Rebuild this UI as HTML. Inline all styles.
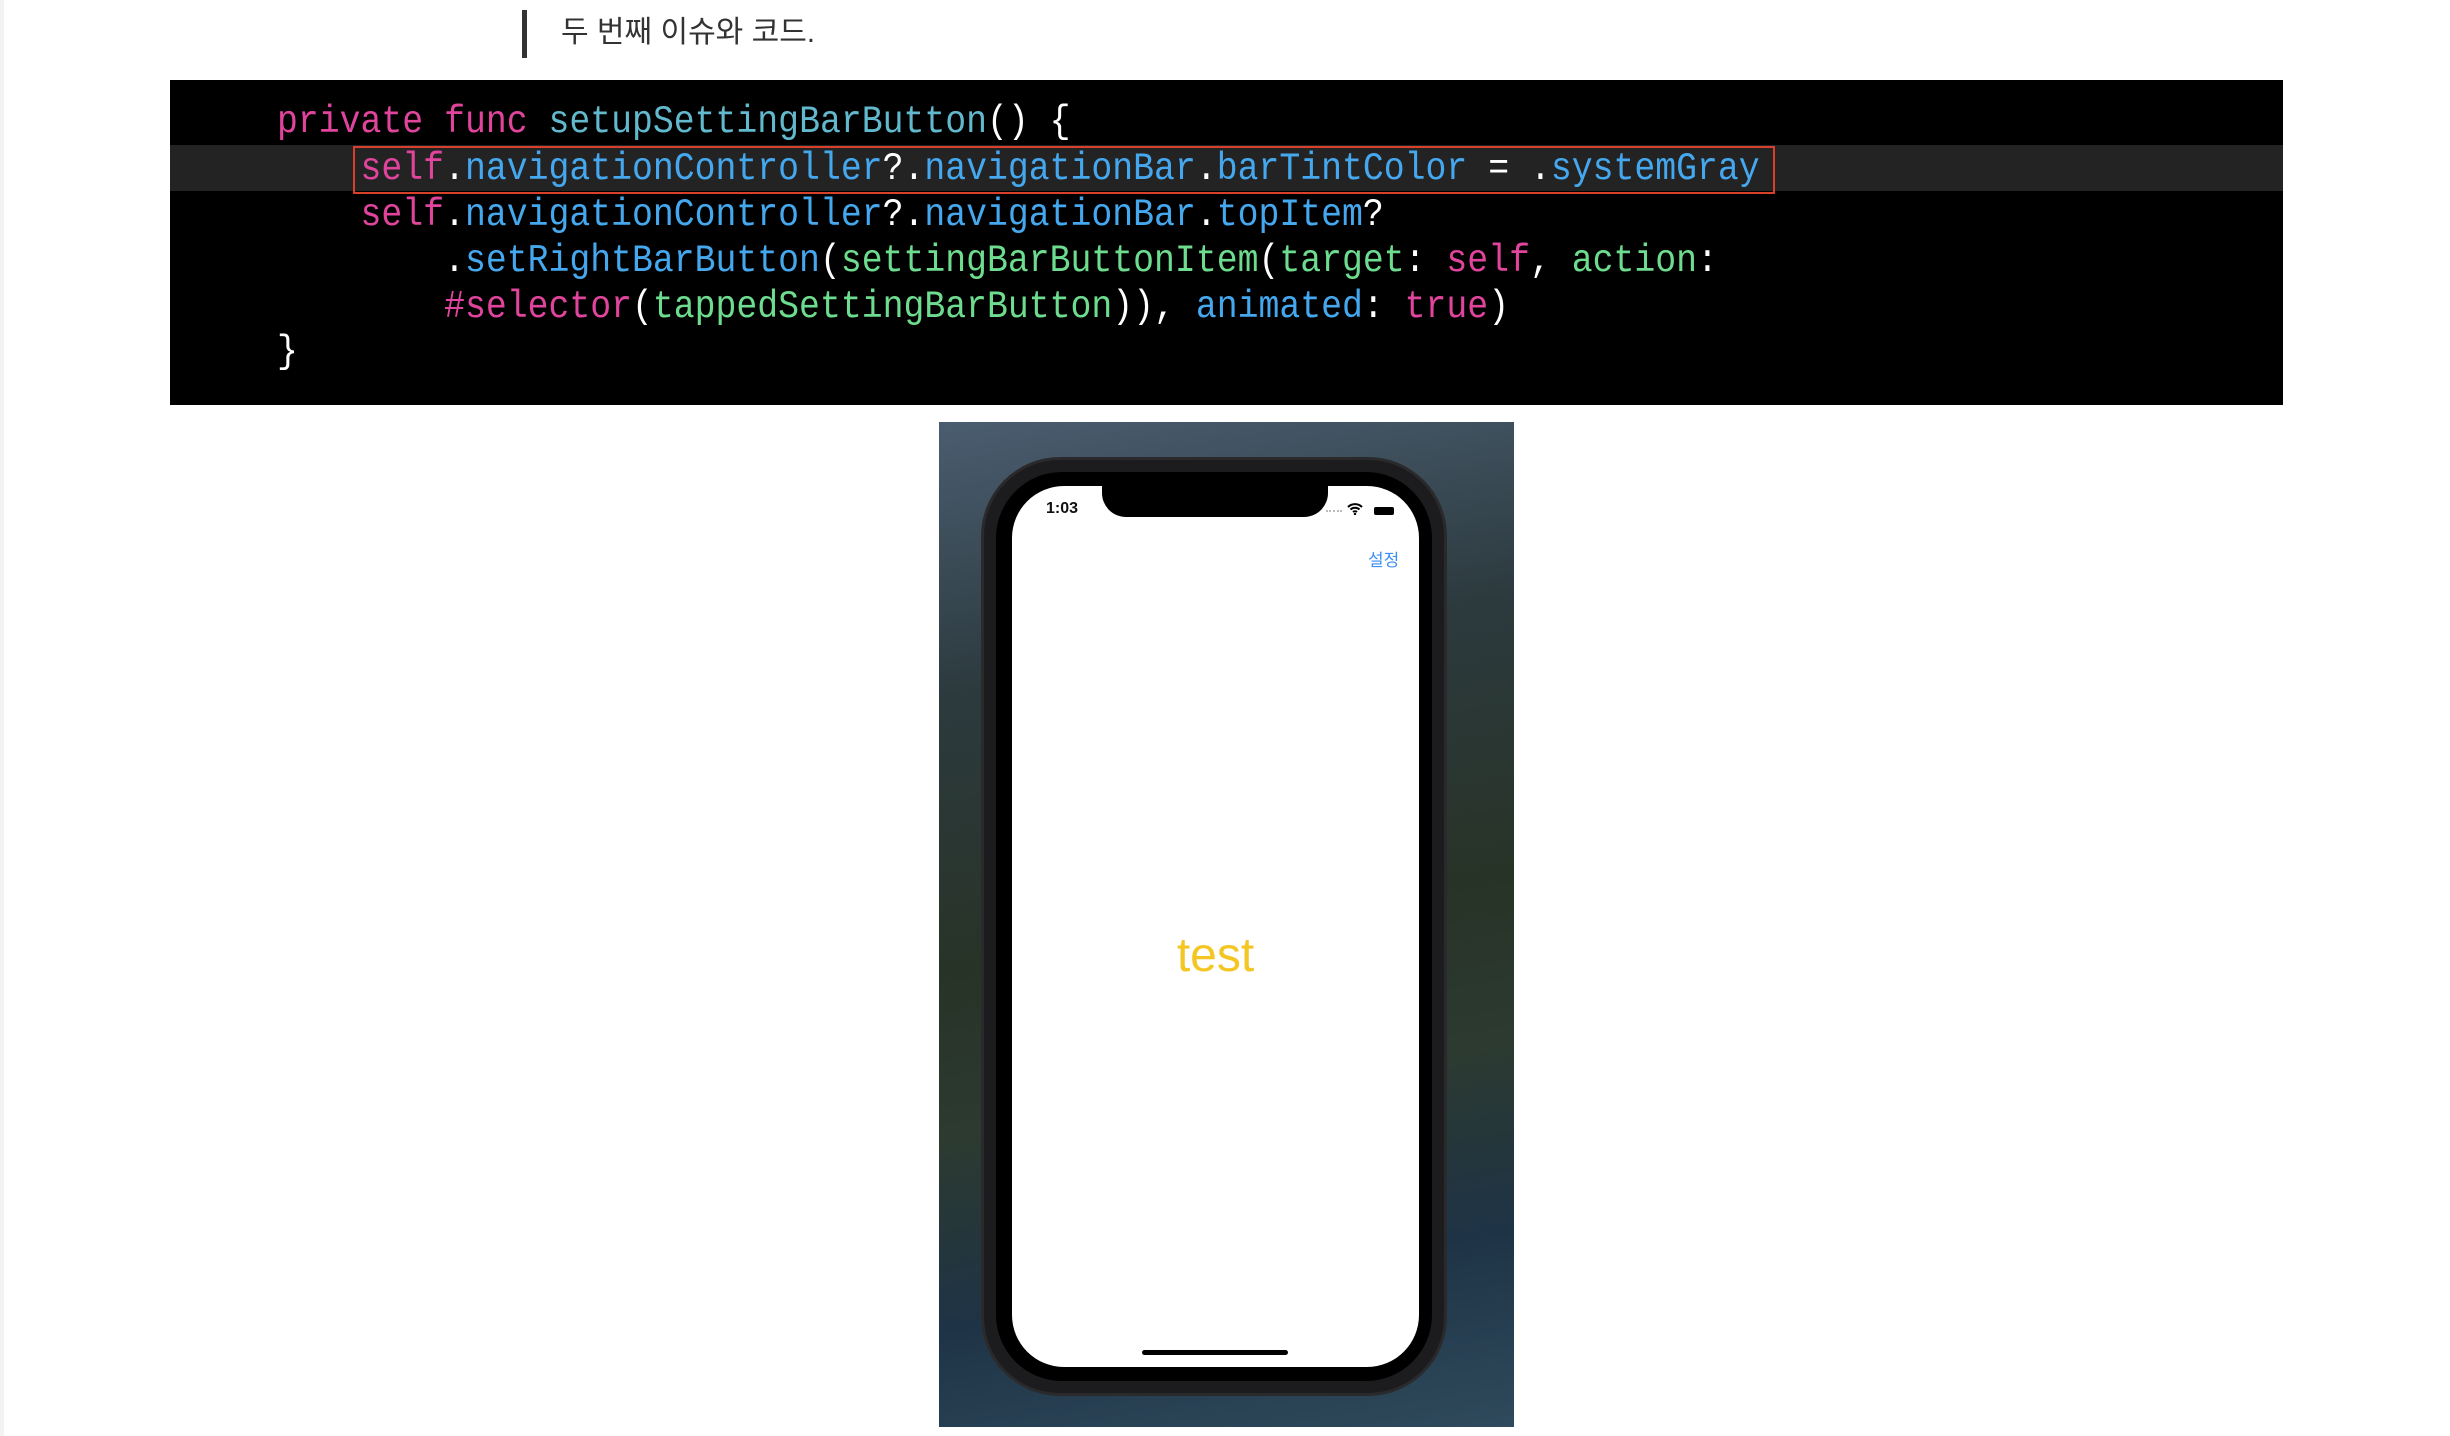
<!DOCTYPE html>
<html><head><meta charset="utf-8"><style>
html,body{margin:0;padding:0;background:#fff;}
body{width:2450px;height:1436px;position:relative;overflow:hidden;font-family:"Liberation Sans","Noto Sans CJK KR",sans-serif;}
.edge{position:absolute;left:0;top:0;width:4px;height:1436px;background:#f3f3f3;}
.bar{position:absolute;left:522px;top:10px;width:5px;height:48px;background:#333;}
.qt{position:absolute;left:561px;top:13px;font-size:30px;line-height:40px;color:#333;font-family:"Liberation Sans","Noto Sans CJK KR",sans-serif;}
.code{position:absolute;left:170px;top:80px;width:2113px;height:325px;background:#000;}
.hl{position:absolute;left:0;top:65px;width:2113px;height:46px;background:#232323;}
.box{position:absolute;left:183px;top:66px;width:1418px;height:44px;border:2px solid #d9402b;}
.ln{position:absolute;left:107px;font-family:"Liberation Mono",monospace;font-size:34.8px;white-space:pre;color:#fff;line-height:46px;transform:scaleY(1.12);transform-origin:left center;}
.k{color:#e0449c}.t{color:#62b8cc}.b{color:#45a8ef}.g{color:#6ddc8e}
.img{position:absolute;left:939px;top:422px;width:575px;height:1005px;background:linear-gradient(170deg,#4a5d70 0%,#2c3a3e 25%,#283327 50%,#2c3a30 65%,#1e3346 82%,#2f4a5c 100%);}
.phone{position:absolute;left:984px;top:460px;width:460px;height:933px;border-radius:76px;background:#1c1c1e;box-shadow:0 0 0 3px #2a2a2c;}
.inner{position:absolute;left:12px;top:12px;right:12px;bottom:12px;border-radius:66px;background:#000;}
.screen{position:absolute;left:1012px;top:486px;width:407px;height:881px;border-radius:52px;background:#fff;overflow:hidden;}
.notch{position:absolute;left:90px;top:-2px;width:226px;height:33px;background:#000;border-radius:0 0 24px 24px;}
</style></head><body>
<div class="edge"></div>
<div class="bar"></div>
<div class="qt">두 번째 이슈와 코드.</div>
<div class="code">
<div class="hl"></div>
<div class="ln" style="top:20px"><span class="k">private</span> <span class="k">func</span> <span class="t">setupSettingBarButton</span>() {</div>
<div class="ln" style="top:67px">    <span class="k">self</span>.<span class="b">navigationController</span>?.<span class="b">navigationBar</span>.<span class="b">barTintColor</span> = .<span class="b">systemGray</span></div>
<div class="ln" style="top:113px">    <span class="k">self</span>.<span class="b">navigationController</span>?.<span class="b">navigationBar</span>.<span class="b">topItem</span>?</div>
<div class="ln" style="top:159px">        .<span class="b">setRightBarButton</span>(<span class="g">settingBarButtonItem</span>(<span class="g">target</span>: <span class="k">self</span>, <span class="g">action</span>:</div>
<div class="ln" style="top:205px">        <span class="k">#selector</span>(<span class="g">tappedSettingBarButton</span>)), <span class="b">animated</span>: <span class="k">true</span>)</div>
<div class="ln" style="top:250px">}</div>
<div class="box"></div>
</div>
<div class="img"></div>
<div class="phone"><div class="inner"></div></div>
<div class="screen">
<div class="notch"></div>
<div style="position:absolute;left:34px;top:14px;font-size:16px;font-weight:bold;color:#111;">1:03</div>
<div style="position:absolute;left:314px;top:24px;width:16px;height:2px;border-top:2px dotted #bbb;"></div>
<svg style="position:absolute;left:335px;top:17px" width="16" height="12" viewBox="0 0 16 12"><path d="M1 4a10 10 0 0 1 14 0M3.5 6.5a6.5 6.5 0 0 1 9 0M6 9a3 3 0 0 1 4 0" stroke="#000" stroke-width="2" fill="none"/><circle cx="8" cy="11" r="1.2"/></svg>
<div style="position:absolute;left:362px;top:21px;width:20px;height:8px;background:#000;border-radius:2px;"></div>
<div style="position:absolute;left:356px;top:60px;font-size:17px;color:#3d8ef7;font-family:'Liberation Sans','Noto Sans CJK KR',sans-serif;">설정</div>
<div style="position:absolute;left:0;width:407px;top:442px;text-align:center;font-size:48px;color:#f3c623;">test</div>
<div style="position:absolute;left:130px;top:864px;width:146px;height:5px;border-radius:3px;background:#000;"></div>
</div>
</body></html>
